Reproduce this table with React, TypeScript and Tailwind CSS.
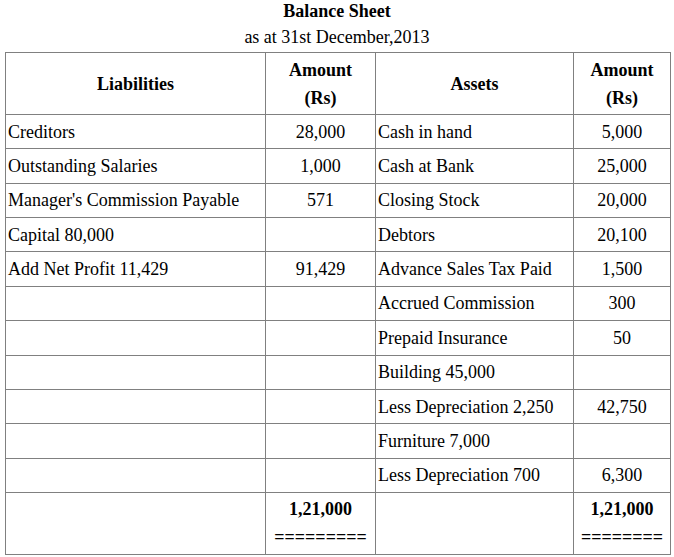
import React from "react";

type Row = [string, string, string, string];

const rows: Row[] = [
  ["Creditors", "28,000", "Cash in hand", "5,000"],
  ["Outstanding Salaries", "1,000", "Cash at Bank", "25,000"],
  ["Manager's Commission Payable", "571", "Closing Stock", "20,000"],
  ["Capital 80,000", "", "Debtors", "20,100"],
  ["Add Net Profit 11,429", "91,429", "Advance Sales Tax Paid", "1,500"],
  ["", "", "Accrued Commission", "300"],
  ["", "", "Prepaid Insurance", "50"],
  ["", "", "Building 45,000", ""],
  ["", "", "Less Depreciation 2,250", "42,750"],
  ["", "", "Furniture 7,000", ""],
  ["", "", "Less Depreciation 700", "6,300"],
];

const cell = "border border-[#808080] px-[2px] py-0 h-[34.36px] leading-[28px] align-middle";

export default function App() {
  return (
    <div className="w-[674px] h-[557px] bg-white text-black text-[18px] font-['Liberation_Serif',serif]">
      <div className="text-center font-bold h-[22px] leading-[22px]">Balance Sheet</div>
      <div className="text-center h-[30px] leading-[30px]">as at 31st December,2013</div>
      <table className="ml-[5px] w-[665px] table-fixed border-collapse">
        <colgroup>
          <col className="w-[260px]" />
          <col className="w-[110px]" />
          <col className="w-[198px]" />
          <col className="w-[97px]" />
        </colgroup>
        <thead>
          <tr>
            <th className={cell + " h-[62px] font-bold text-center"}>Liabilities</th>
            <th className={cell + " h-[62px] font-bold text-center"}>
              Amount
              <br />
              (Rs)
            </th>
            <th className={cell + " h-[62px] font-bold text-center"}>Assets</th>
            <th className={cell + " h-[62px] font-bold text-center"}>
              Amount
              <br />
              (Rs)
            </th>
          </tr>
        </thead>
        <tbody>
          {rows.map((r, i) => (
            <tr key={i}>
              <td className={cell}>{r[0]}</td>
              <td className={cell + " text-center"}>{r[1]}</td>
              <td className={cell}>{r[2]}</td>
              <td className={cell + " text-center"}>{r[3]}</td>
            </tr>
          ))}
          <tr>
            <td className={cell + " h-[62px]"}></td>
            <td className={cell + " h-[62px] text-center font-bold"}>
              1,21,000
              <br />
              =========
            </td>
            <td className={cell + " h-[62px]"}></td>
            <td className={cell + " h-[62px] text-center font-bold"}>
              1,21,000
              <br />
              ========
            </td>
          </tr>
        </tbody>
      </table>
    </div>
  );
}
